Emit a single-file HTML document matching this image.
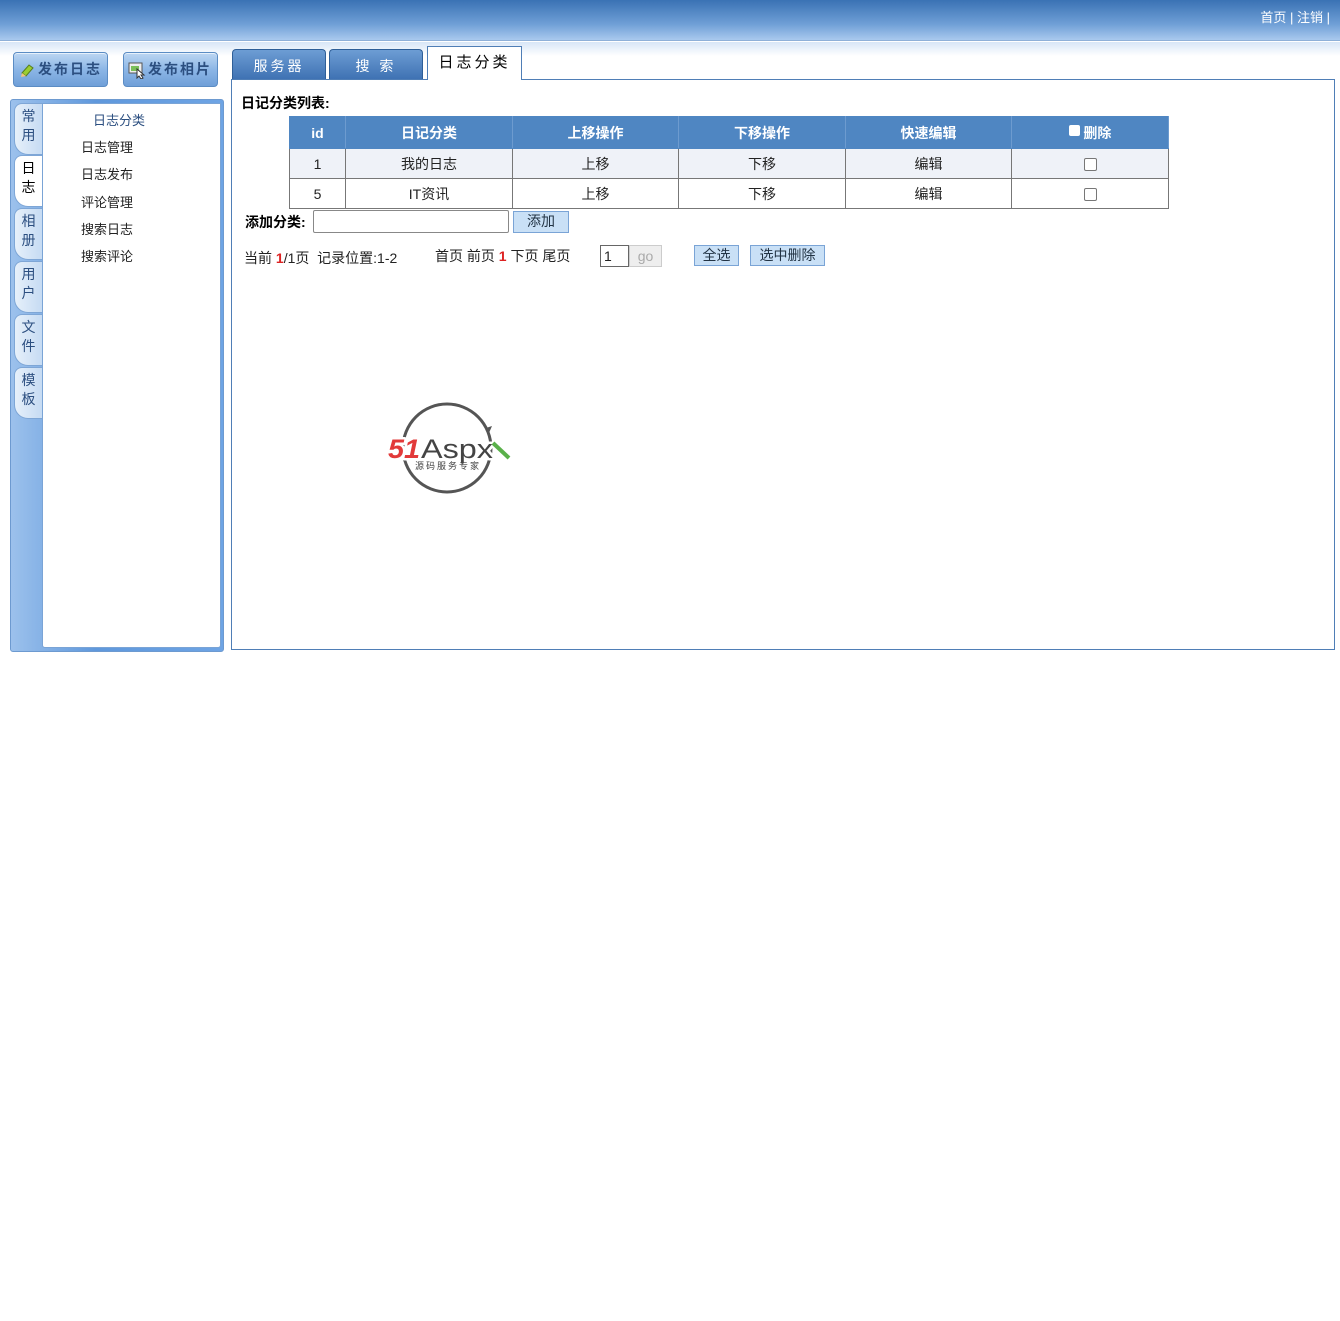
<!DOCTYPE html>
<html><head><meta charset="utf-8">
<style>
*{margin:0;padding:0;box-sizing:border-box}
body{width:1340px;height:1321px;background:#fff;font-family:"Liberation Sans","Noto Sans CJK SC",sans-serif;font-size:13px;color:#222;position:relative;overflow:hidden}
.abs{position:absolute}
#hdr{left:0;top:0;width:1340px;height:41px;background:linear-gradient(#3a72b4,#6f9fd6 60%,#a9c9ee);border-bottom:1px solid #8fb0d8}
#hdr2{left:0;top:42px;width:1340px;height:14px;background:linear-gradient(#d8e6f7,#fff)}
#links{right:10px;top:7px;color:#fff;font-size:13px}
.btn{height:35px;width:95px;border:1px solid #5b8cc4;border-radius:4px;background:linear-gradient(#bcd6f2,#8cb6e6 50%,#6f9fd8);color:#2c4f80;font-weight:bold;font-size:14px;letter-spacing:2px;line-height:33px;text-align:right;padding-right:5px;box-shadow:inset 0 1px 0 #e6f0fb}
.tab{top:49px;height:30px;width:94px;border:1px solid #2f5f98;border-bottom:none;border-radius:4px 4px 0 0;background:linear-gradient(#6d9dd4,#3f72b3);color:#fff;text-align:center;line-height:32px;font-size:14px;letter-spacing:3px}
#tabA{left:427px;top:46px;height:34px;width:95px;background:#fff;border:1px solid #4f7eb6;border-bottom:none;color:#000;font-size:15px;line-height:32px;text-align:center;letter-spacing:3px;z-index:2}
#main{left:231px;top:79px;width:1104px;height:571px;border:1px solid #4f7eb6;background:#fff}
#left{left:10px;top:99px;width:214px;height:553px;border:1px solid #6d9ad0;border-radius:3px;background:linear-gradient(90deg,#9cc1ec,#5f98dc 40%,#6ea4e4);}
#inner{left:42px;top:103px;width:179px;height:545px;background:#fff;border:1px solid #7aa4d6;border-radius:0 0 3px 3px}
.vt{left:14px;width:28px;height:52px;background:linear-gradient(90deg,#e6f0fa,#c6dbf3);border:1px solid #7ea6d6;border-right:none;border-radius:8px 0 0 14px;color:#2c4f80;font-size:14px;text-align:center;line-height:19px;padding-top:3px}
.vt.on{background:#fff;color:#000}
.ml{left:81px;font-size:13px;color:#222}
table{position:absolute;left:289px;top:116px;border-collapse:collapse;font-size:14px}
td,th{border:1px solid #777;text-align:center;height:30px}
th{background:#4f86c2;color:#fff;font-weight:bold;border-color:#4f86c2;border-right:1px solid #6d9bcf;height:32px}
tr.r1 td{background:#eff2f8}
.cb{display:inline-block;width:13px;height:13px;border:1px solid #777;border-radius:2px;background:#fff;vertical-align:middle}
.sb{border:1px solid #7aa4d6;background:#c9e0f6;color:#234;font-size:14px;text-align:center;height:21px;line-height:19px}
</style></head><body>
<div id="hdr" class="abs"></div><div id="hdr2" class="abs"></div>
<div id="links" class="abs">首页 | 注销 |</div>

<div class="abs btn" style="left:13px;top:52px">
<svg class="abs" style="left:5px;top:9px" width="16" height="16"><path d="M3 11 L10 3 L14 6 L7 14 Z" fill="#9acd32" stroke="#567d1e"/><path d="M3 11 L2 15 L7 14 Z" fill="#f3c67a"/></svg>发布日志</div>
<div class="abs btn" style="left:123px;top:52px">
<svg class="abs" style="left:4px;top:8px" width="18" height="18"><rect x="1" y="2" width="13" height="10" fill="#eee" stroke="#555"/><rect x="3" y="5" width="8" height="5" fill="#7bbf5a"/><path d="M9 8 L9 17 L11 15 L13 18 L15 17 L13 14 L16 14 Z" fill="#fff" stroke="#333"/></svg>发布相片</div>

<div class="abs tab" style="left:232px">服务器</div>
<div class="abs tab" style="left:329px">搜 索</div>
<div id="tabA" class="abs">日志分类</div>
<div id="main" class="abs"></div>

<div id="left" class="abs"></div>
<div id="inner" class="abs"></div>
<div class="abs vt" style="top:103px">常<br>用</div>
<div class="abs vt on" style="top:155px">日<br>志</div>
<div class="abs vt" style="top:208px">相<br>册</div>
<div class="abs vt" style="top:261px">用<br>户</div>
<div class="abs vt" style="top:314px">文<br>件</div>
<div class="abs vt" style="top:367px">模<br>板</div>
<div class="abs" style="left:93px;top:110px;color:#2c4f80;font-size:13px">日志分类</div>
<div class="abs ml" style="top:137px">日志管理</div>
<div class="abs ml" style="top:164px">日志发布</div>
<div class="abs ml" style="top:192px">评论管理</div>
<div class="abs ml" style="top:219px">搜索日志</div>
<div class="abs ml" style="top:246px">搜索评论</div>

<div class="abs" style="left:241px;top:93px;font-weight:bold;font-size:14px;color:#000">日记分类列表:</div>
<table>
<tr><th style="width:56px">id</th><th style="width:167px">日记分类</th><th style="width:166px">上移操作</th><th style="width:167px">下移操作</th><th style="width:166px">快速编辑</th><th style="width:157px"><span class="cb" style="width:11px;height:11px;border:none;vertical-align:2px"></span> 删除</th></tr>
<tr class="r1"><td>1</td><td>我的日志</td><td>上移</td><td>下移</td><td>编辑</td><td><span class="cb"></span></td></tr>
<tr><td>5</td><td>IT资讯</td><td>上移</td><td>下移</td><td>编辑</td><td><span class="cb"></span></td></tr>
</table>
<div class="abs" style="left:245px;top:212px;font-weight:bold;font-size:14px;color:#000">添加分类:</div>
<div class="abs" style="left:313px;top:210px;width:196px;height:23px;border:1px solid #888;border-radius:2px"></div>
<div class="abs sb" style="left:513px;top:211px;width:56px;height:22px">添加</div>
<div class="abs" style="left:244px;top:248px;font-size:14px">当前 <b style="color:#d22">1</b>/1页&nbsp; 记录位置:1-2</div>
<div class="abs" style="left:435px;top:246px;font-size:14px">首页 前页 <b style="color:#d22">1</b> 下页 尾页</div>
<div class="abs" style="left:600px;top:245px;width:29px;height:22px;border:1px solid #666;font-size:14px;padding-left:3px;line-height:20px">1</div>
<div class="abs" style="left:629px;top:245px;width:33px;height:22px;border:1px solid #ccc;background:#eee;color:#aaa;text-align:center;font-size:14px;line-height:20px">go</div>
<div class="abs sb" style="left:694px;top:245px;width:45px">全选</div>
<div class="abs sb" style="left:750px;top:245px;width:75px">选中删除</div>

<svg class="abs" style="left:385px;top:400px" width="130" height="96">
<circle cx="62" cy="48" r="44" fill="none" stroke="#555" stroke-width="3"/>
<path d="M101 28 l6 -2 l-3 7z" fill="#555"/>
<g paint-order="stroke" stroke="#fff" stroke-width="5" stroke-linejoin="round">
<text x="3" y="58" font-family="Liberation Sans" font-weight="bold" font-style="italic" font-size="27" fill="#e23a3a" textLength="32" lengthAdjust="spacingAndGlyphs">51</text>
<text x="36" y="58" font-family="Liberation Sans" font-size="27" fill="#444" textLength="72" lengthAdjust="spacingAndGlyphs">Aspx</text>
</g>
<path d="M108 43 L124 58" stroke="#5ab04a" stroke-width="4"/>
<text x="30" y="69" font-family="Noto Sans CJK SC" font-size="9" fill="#444" textLength="64">源码服务专家</text>
</svg>
</body></html>
